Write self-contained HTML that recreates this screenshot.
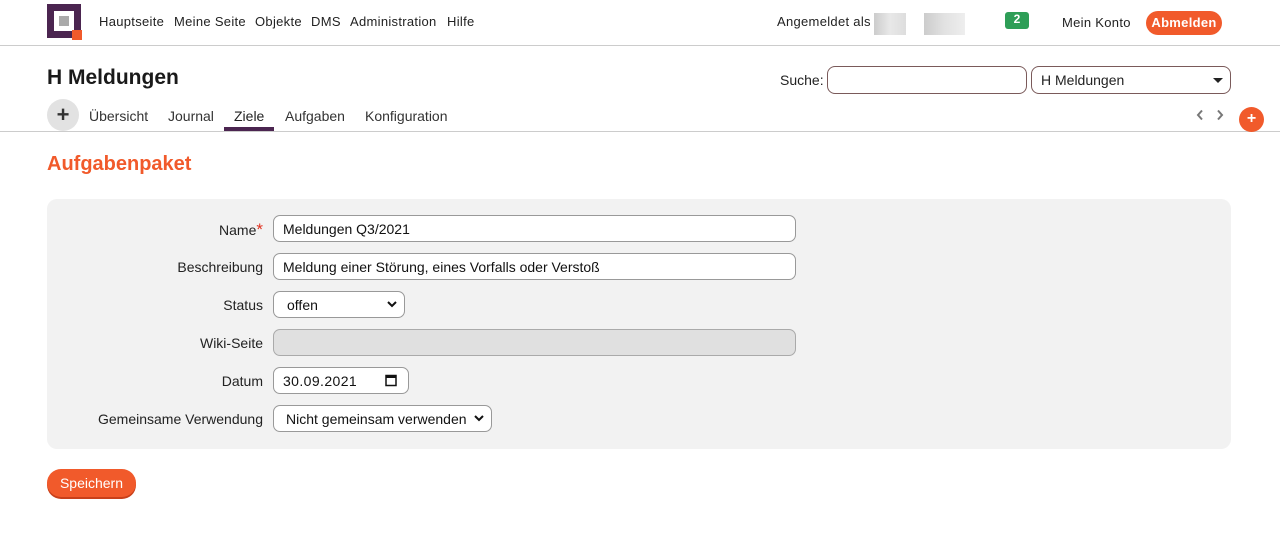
<!DOCTYPE html>
<html><head><meta charset="utf-8"><style>
*{box-sizing:border-box;margin:0;padding:0}
body{width:1280px;height:546px;background:#fff;font-family:"Liberation Sans",sans-serif;color:#222;position:relative;overflow:hidden;font-size:14px}
.a{position:absolute}
.nav{font-size:13px;color:#222;top:14px;letter-spacing:0.3px}
.inp{position:absolute;left:273px;height:27px;border:1px solid #999;border-radius:7px;background:#fff;font-size:14px;padding:5px 9px;color:#111;width:523px}
.lbl{position:absolute;right:1017px;font-size:14px;color:#222;text-align:right;white-space:nowrap}
.chev{position:absolute;right:7px;top:8px}
</style></head><body>
<div class="a" style="left:47px;top:4px;width:34px;height:34px;background:#4b2550"></div>
<div class="a" style="left:54px;top:11px;width:20px;height:20px;background:#fff"></div>
<div class="a" style="left:59px;top:16px;width:10px;height:10px;background:#aaa"></div>
<div class="a" style="left:72px;top:30px;width:10px;height:10px;background:#f15a2b"></div>
<div class="a nav" style="left:99px">Hauptseite</div>
<div class="a nav" style="left:174px">Meine Seite</div>
<div class="a nav" style="left:255px">Objekte</div>
<div class="a nav" style="left:311px">DMS</div>
<div class="a nav" style="left:350px">Administration</div>
<div class="a nav" style="left:447px">Hilfe</div>
<div class="a nav" style="left:777px">Angemeldet als</div>
<div class="a" style="left:874px;top:13px;width:32px;height:22px;background:linear-gradient(90deg,#ccc,#e8e8e8,#ddd)"></div>
<div class="a" style="left:924px;top:13px;width:41px;height:22px;background:linear-gradient(90deg,#ccc,#e2e2e2,#eee)"></div>
<div class="a" style="left:1005px;top:12px;width:24px;height:17px;background:#2e9e57;border-radius:3px;color:#fff;font-weight:bold;font-size:12px;text-align:center;line-height:15px">2</div>
<div class="a nav" style="left:1062px;top:15px">Mein Konto</div>
<div class="a" style="left:1146px;top:11px;width:76px;height:24px;background:#f15a2b;border-radius:12px;color:#fff;font-weight:bold;font-size:13px;text-align:center;line-height:23px;letter-spacing:0.3px">Abmelden</div>
<div class="a" style="left:0;top:45px;width:1280px;height:1px;background:#ccc"></div>
<div class="a" style="left:47px;top:66px;font-size:21px;font-weight:bold;color:#1a1a1a">H Meldungen</div>
<div class="a" style="left:780px;top:72px;font-size:14px">Suche:</div>
<div class="a" style="left:827px;top:66px;width:200px;height:28px;border:1px solid #7a5a5a;border-radius:8px"></div>
<div class="a" style="left:1031px;top:66px;width:200px;height:28px;border:1px solid #7a5a5a;border-radius:8px;font-size:14px;padding:5px 9px">H Meldungen</div>
<div class="a" style="left:1213px;top:78px;width:0;height:0;border-left:5px solid transparent;border-right:5px solid transparent;border-top:5px solid #222"></div>
<div class="a" style="left:47px;top:99px;width:32px;height:32px;border-radius:50%;background:#e2e2e2;text-align:center;line-height:31px;font-size:22px;font-weight:bold;color:#333">+</div>
<div class="a" style="left:89px;top:108px;font-size:14px;color:#333">Übersicht</div>
<div class="a" style="left:168px;top:108px;font-size:14px;color:#333">Journal</div>
<div class="a" style="left:234px;top:108px;font-size:14px;color:#222">Ziele</div>
<div class="a" style="left:224px;top:127px;width:50px;height:4px;background:#4b2550"></div>
<div class="a" style="left:285px;top:108px;font-size:14px;color:#333">Aufgaben</div>
<div class="a" style="left:365px;top:108px;font-size:14px;color:#333">Konfiguration</div>
<svg class="a" style="left:1196px;top:109px" width="8" height="12" viewBox="0 0 8 12"><path d="M6 1.5L2 6l4 4.5" stroke="#777" stroke-width="2" fill="none"/></svg>
<svg class="a" style="left:1216px;top:109px" width="8" height="12" viewBox="0 0 8 12"><path d="M2 1.5L6 6l-4 4.5" stroke="#777" stroke-width="2" fill="none"/></svg>
<div class="a" style="left:0;top:131px;width:1280px;height:1px;background:#ccc"></div>
<div class="a" style="left:1239px;top:107px;width:25px;height:25px;border-radius:50%;background:#f15a2b;color:#fff;text-align:center;line-height:23px;font-weight:bold;font-size:16px">+</div>
<div class="a" style="left:47px;top:153px;font-size:20px;font-weight:bold;color:#f15a2b">Aufgabenpaket</div>
<div class="a" style="left:47px;top:199px;width:1184px;height:250px;background:#f2f2f2;border-radius:10px"></div>
<div class="lbl" style="top:220px">Name<span style="color:#e0301e;font-size:17px">*</span></div>
<div class="inp" style="top:215px">Meldungen Q3/2021</div>
<div class="lbl" style="top:259px">Beschreibung</div>
<div class="inp" style="top:253px">Meldung einer Störung, eines Vorfalls oder Verstoß</div>
<div class="lbl" style="top:297px">Status</div>
<div class="inp" style="top:291px;width:132px;padding-left:13px">offen<svg class="chev" width="10" height="8" viewBox="0 0 10 8"><path d="M1 2l4 4 4-4" stroke="#111" stroke-width="2" fill="none"/></svg></div>
<div class="lbl" style="top:335px">Wiki-Seite</div>
<div class="inp" style="top:329px;background:#e0e0e0;border-color:#aaa"></div>
<div class="lbl" style="top:373px">Datum</div>
<div class="inp" style="top:367px;width:136px;letter-spacing:0.4px">30.09.2021<svg class="a" style="right:11px;top:6px" width="12" height="13" viewBox="0 0 12 13"><rect x="1" y="1.5" width="10" height="10" fill="none" stroke="#111" stroke-width="1.5"/><rect x="1" y="1.5" width="10" height="2.5" fill="#111"/></svg></div>
<div class="lbl" style="top:411px">Gemeinsame Verwendung</div>
<div class="inp" style="top:405px;width:219px;padding-left:12px">Nicht gemeinsam verwenden<svg class="chev" width="10" height="8" viewBox="0 0 10 8"><path d="M1 2l4 4 4-4" stroke="#111" stroke-width="2" fill="none"/></svg></div>
<div class="a" style="left:47px;top:469px;width:89px;height:28px;background:#f15a2b;border-radius:14px;box-shadow:0 2px 0 #c8401a;color:#fff;font-size:14px;text-align:center;line-height:28px">Speichern</div>
</body></html>
